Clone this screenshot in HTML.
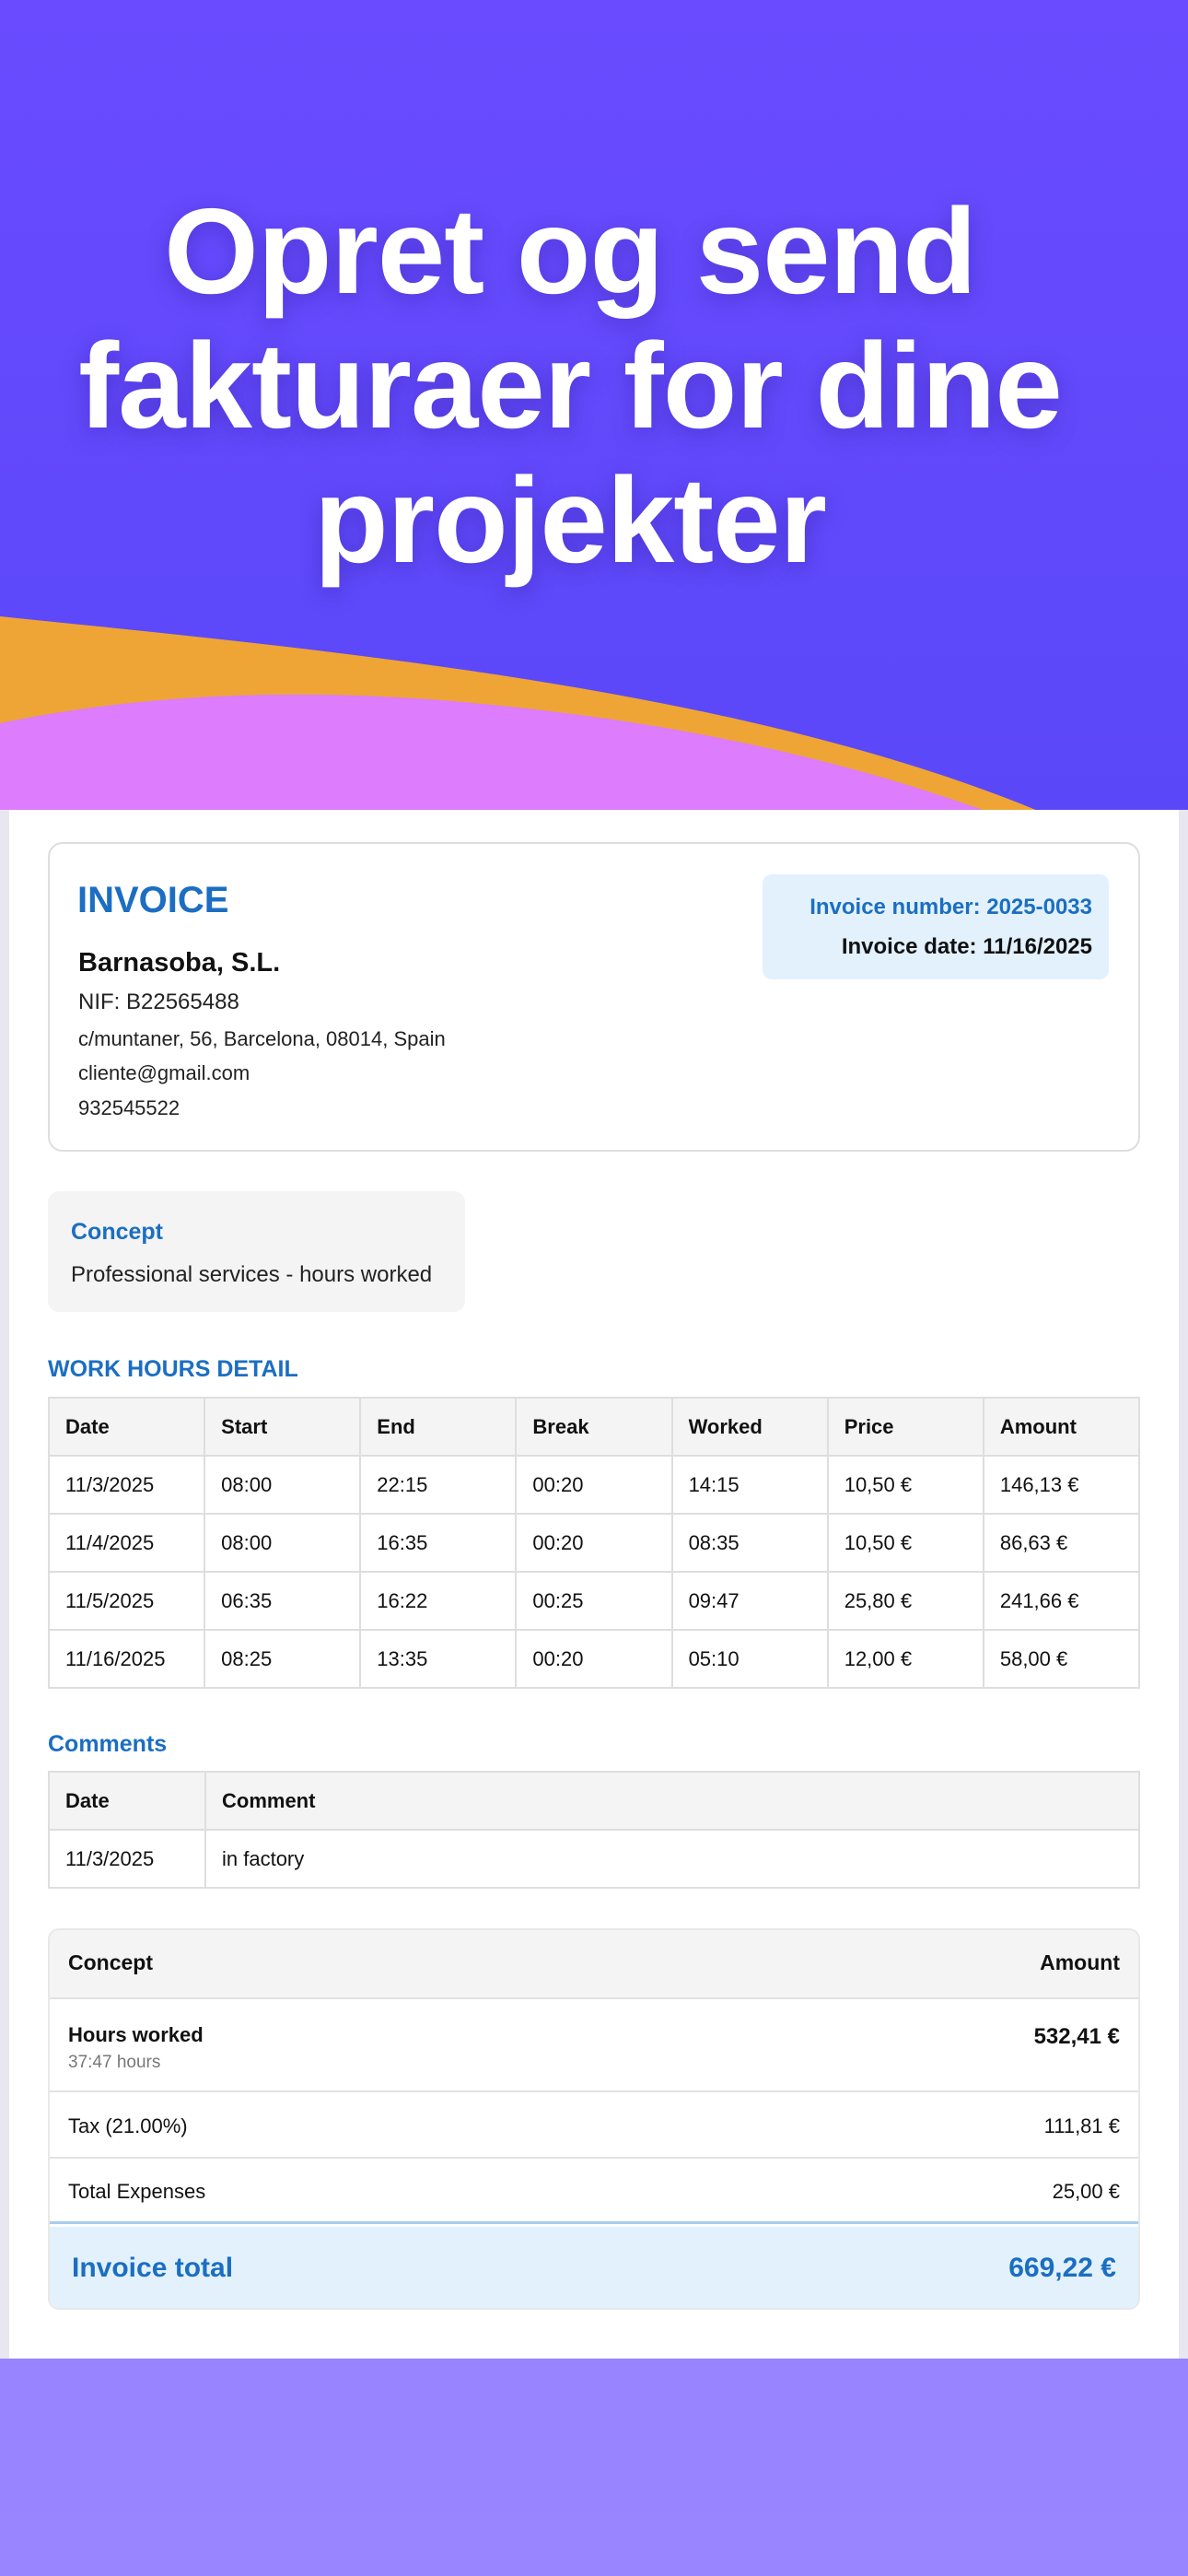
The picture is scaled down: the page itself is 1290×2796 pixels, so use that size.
<!DOCTYPE html>
<html><head><meta charset="utf-8"><style>
*{margin:0;padding:0;box-sizing:border-box}
body{width:1290px;height:2796px;position:relative;overflow:hidden;font-family:"Liberation Sans",sans-serif;background:linear-gradient(#8a78f9,#9985ff)}
.top{position:absolute;left:0;top:0;width:1290px;height:880px;background:linear-gradient(#6a4bff,#5a48f8)}
h1{position:absolute;left:0;top:200px;width:1238px;text-align:center;color:#fff;font-size:132px;line-height:146px;font-weight:bold;letter-spacing:-1px;text-shadow:0 6px 24px rgba(40,20,140,.35)}
.panel{position:absolute;left:0;top:879px;width:1290px;height:1681px;background:#fff;border-left:10px solid #e8e7f1;border-right:10px solid #e8e7f1}
.a{position:absolute;white-space:nowrap}
.blue{color:#1b6ec2}
.card{position:absolute;left:52px;top:914px;width:1186px;height:336px;border:2px solid #dedede;border-radius:16px}
.inb{position:absolute;left:828px;top:949px;width:376px;height:114px;background:#e2f1fc;border-radius:10px}
table{position:absolute;border-collapse:collapse;font-size:22px;color:#111}
td{border:2px solid #dedede;padding:0 17px;height:63px}
th{border:2px solid #dedede;padding:0 17px;height:63px;background:#f4f4f4;text-align:left;font-weight:bold}
.sum{position:absolute;left:52px;top:2093px;width:1186px;height:414px;border-radius:12px;overflow:hidden;border:2px solid #e8e8e8;font-size:22px;color:#111}
.row{position:absolute;left:0;width:100%;border-bottom:2px solid #e2e2e2}
</style></head><body>
<div class="top"></div>
<svg style="position:absolute;left:0;top:0" width="1290" height="880">
<path d="M0,669 C350,705 800,745 1127,880 L0,880 Z" fill="#eea535"/>
<path d="M0,785 C160,752 320,748 480,760 C720,780 900,820 1070,880 L0,880 Z" fill="#dd7cfd"/>
</svg>
<h1>Opret og send<br>fakturaer for dine<br>projekter</h1>
<div class="panel"></div>
<div class="card"></div>
<div class="a blue" style="left:84px;top:955px;font-size:40px;font-weight:bold">INVOICE</div>
<div class="a" style="left:85px;top:1029px;font-size:29px;font-weight:bold;color:#111">Barnasoba, S.L.</div>
<div class="a" style="left:85px;top:1074px;font-size:24px;color:#222">NIF: B22565488</div>
<div class="a" style="left:85px;top:1115px;font-size:22px;color:#222">c/muntaner, 56, Barcelona, 08014, Spain</div>
<div class="a" style="left:85px;top:1152px;font-size:22px;color:#222">cliente@gmail.com</div>
<div class="a" style="left:85px;top:1190px;font-size:22px;color:#222">932545522</div>
<div class="inb"></div>
<div class="a blue" style="right:104px;top:971px;font-size:24px;font-weight:bold">Invoice number: 2025-0033</div>
<div class="a" style="right:104px;top:1014px;font-size:24px;font-weight:bold;color:#111">Invoice date: 11/16/2025</div>
<div style="position:absolute;left:52px;top:1293px;width:453px;height:131px;background:#f4f4f4;border-radius:12px"></div>
<div class="a blue" style="left:77px;top:1323px;font-size:25px;font-weight:bold">Concept</div>
<div class="a" style="left:77px;top:1370px;font-size:24px;color:#222">Professional services - hours worked</div>
<div class="a blue" style="left:52px;top:1472px;font-size:25px;font-weight:bold">WORK HOURS DETAIL</div>
<table style="left:52px;top:1516px;width:1186px;table-layout:fixed">
<tr><th>Date</th><th>Start</th><th>End</th><th>Break</th><th>Worked</th><th>Price</th><th>Amount</th></tr>
<tr><td>11/3/2025</td><td>08:00</td><td>22:15</td><td>00:20</td><td>14:15</td><td>10,50 €</td><td>146,13 €</td></tr>
<tr><td>11/4/2025</td><td>08:00</td><td>16:35</td><td>00:20</td><td>08:35</td><td>10,50 €</td><td>86,63 €</td></tr>
<tr><td>11/5/2025</td><td>06:35</td><td>16:22</td><td>00:25</td><td>09:47</td><td>25,80 €</td><td>241,66 €</td></tr>
<tr><td>11/16/2025</td><td>08:25</td><td>13:35</td><td>00:20</td><td>05:10</td><td>12,00 €</td><td>58,00 €</td></tr>
</table>
<div class="a blue" style="left:52px;top:1879px;font-size:25px;font-weight:bold">Comments</div>
<table style="left:52px;top:1922px;width:1186px">
<tr><th style="width:170px">Date</th><th>Comment</th></tr>
<tr><td>11/3/2025</td><td>in factory</td></tr>
</table>
<div class="sum">
<div class="row" style="top:0;height:75px;background:#f4f4f4"></div>
<div class="a" style="left:20px;top:22px;font-weight:bold;font-size:23px">Concept</div>
<div class="a" style="right:20px;top:22px;font-weight:bold;font-size:23px">Amount</div>
<div class="row" style="top:75px;height:101px"></div>
<div class="a" style="left:20px;top:101px;font-weight:bold">Hours worked</div>
<div class="a" style="left:20px;top:133px;font-size:19px;color:#777">37:47 hours</div>
<div class="a" style="right:20px;top:102px;font-weight:bold;font-size:24px">532,41 €</div>
<div class="row" style="top:176px;height:72px"></div>
<div class="a" style="left:20px;top:200px">Tax (21.00%)</div>
<div class="a" style="right:20px;top:200px">111,81 €</div>
<div class="row" style="top:248px;height:71px;border-bottom:3px solid #a8cdee"></div>
<div class="a" style="left:20px;top:271px">Total Expenses</div>
<div class="a" style="right:20px;top:271px">25,00 €</div>
<div class="row" style="top:322px;height:92px;background:#e2f1fc;border:0"></div>
<div class="a blue" style="left:24px;top:350px;font-size:30px;font-weight:bold">Invoice total</div>
<div class="a blue" style="right:24px;top:350px;font-size:30px;font-weight:bold">669,22 €</div>
</div>
</body></html>
